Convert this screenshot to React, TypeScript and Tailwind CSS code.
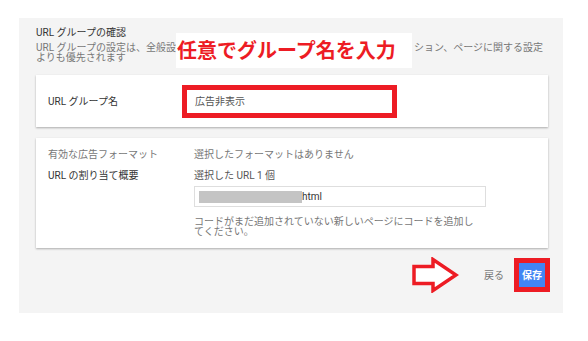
import React from 'react';

const font = { fontFamily: 'Roboto, "Noto Sans CJK JP", sans-serif' };

const RightArrow: React.FC = () => (
    <svg width="47" height="36" viewBox="0 0 47 36" fill="none">
        <path
            d="M2 9.5 H21 V2.5 L44 18 L21 33.5 V26.5 H2 Z"
            stroke="#ed1c24"
            strokeWidth="3.5"
            strokeLinejoin="miter"
            fill="#ffffff"
        />
    </svg>
);

export default function App() {
    return (
        <div className="w-[588px] h-[341px] bg-white pt-[18px] pl-[19px]" style={font}>
            <div className="relative w-[544px] h-[295px] bg-[#f4f4f4] pt-[8px] pl-[17px] pr-[15px]">
                {/* header */}
                <p className="text-[10px] leading-[14px] text-[#333]">URL グループの確認</p>
                <p className="mt-[3px] text-[10px] leading-[10px] text-[#777] whitespace-nowrap">
                    URL グループの設定は、全般設
                    {/* part hidden behind the annotation */}
                    <span className="inline-block w-[238px]" />
                    ション、ページに関する設定
                    <br />
                    よりも優先されます
                </p>

                {/* annotation label */}
                <div className="absolute left-[157px] top-[15px] w-[236px] h-[35px] bg-white flex items-center pl-[1px]">
                    <span className="text-[20px] leading-none font-bold text-[#ed1c24] whitespace-nowrap">
                        任意でグループ名を入力
                    </span>
                </div>

                {/* URL group name card */}
                <div className="mt-[12px] h-[52px] bg-white shadow-[0_1px_2px_rgba(0,0,0,0.3)] flex items-center pl-[12px]">
                    <span className="w-[134px] text-[10px] text-[#333]">URL グループ名</span>
                    <div className="w-[215px] h-[33px] border-[5px] border-[#ed1c24] flex items-center pl-[8px]">
                        <span className="text-[10px] text-[#555]">広告非表示</span>
                    </div>
                </div>

                {/* details card */}
                <div className="mt-[11px] h-[110px] bg-white shadow-[0_1px_2px_rgba(0,0,0,0.3)] pt-[10px] pl-[12px]">
                    <div className="flex text-[10px] leading-[14px]">
                        <span className="w-[146px] text-[#777]">有効な広告フォーマット</span>
                        <span className="text-[#777]">選択したフォーマットはありません</span>
                    </div>
                    <div className="flex mt-[7px] text-[10px]">
                        <span className="w-[146px] leading-[14px] text-[#333]">URL の割り当て概要</span>
                        <div>
                            <p className="leading-[14px] text-[#555]">選択した URL 1 個</p>
                            <div className="mt-[3px] w-[292px] h-[21px] border border-[#dedede] flex items-center pl-[4px]">
                                <div className="w-[103px] h-[12px] bg-[#c4c4c4]" />
                                <span className="text-[10px] text-[#333]">html</span>
                            </div>
                            <p className="mt-[10px] leading-[10px] text-[#777] whitespace-nowrap">
                                コードがまだ追加されていない新しいページにコードを追加し
                                <br />
                                てください。
                            </p>
                        </div>
                    </div>
                </div>

                {/* footer actions */}
                <div className="mt-[9px] -mr-[2px] flex items-center justify-end">
                    <RightArrow />
                    <span className="ml-[25px] text-[10px] text-[#777]">戻る</span>
                    <div className="ml-[10px] w-[36px] h-[34px] border-[5px] border-[#ed1c24]">
                        <div className="w-full h-full bg-[#4285f4] flex items-center justify-center">
                            <span className="text-[10px] font-bold text-white">保存</span>
                        </div>
                    </div>
                </div>
            </div>
        </div>
    );
}
